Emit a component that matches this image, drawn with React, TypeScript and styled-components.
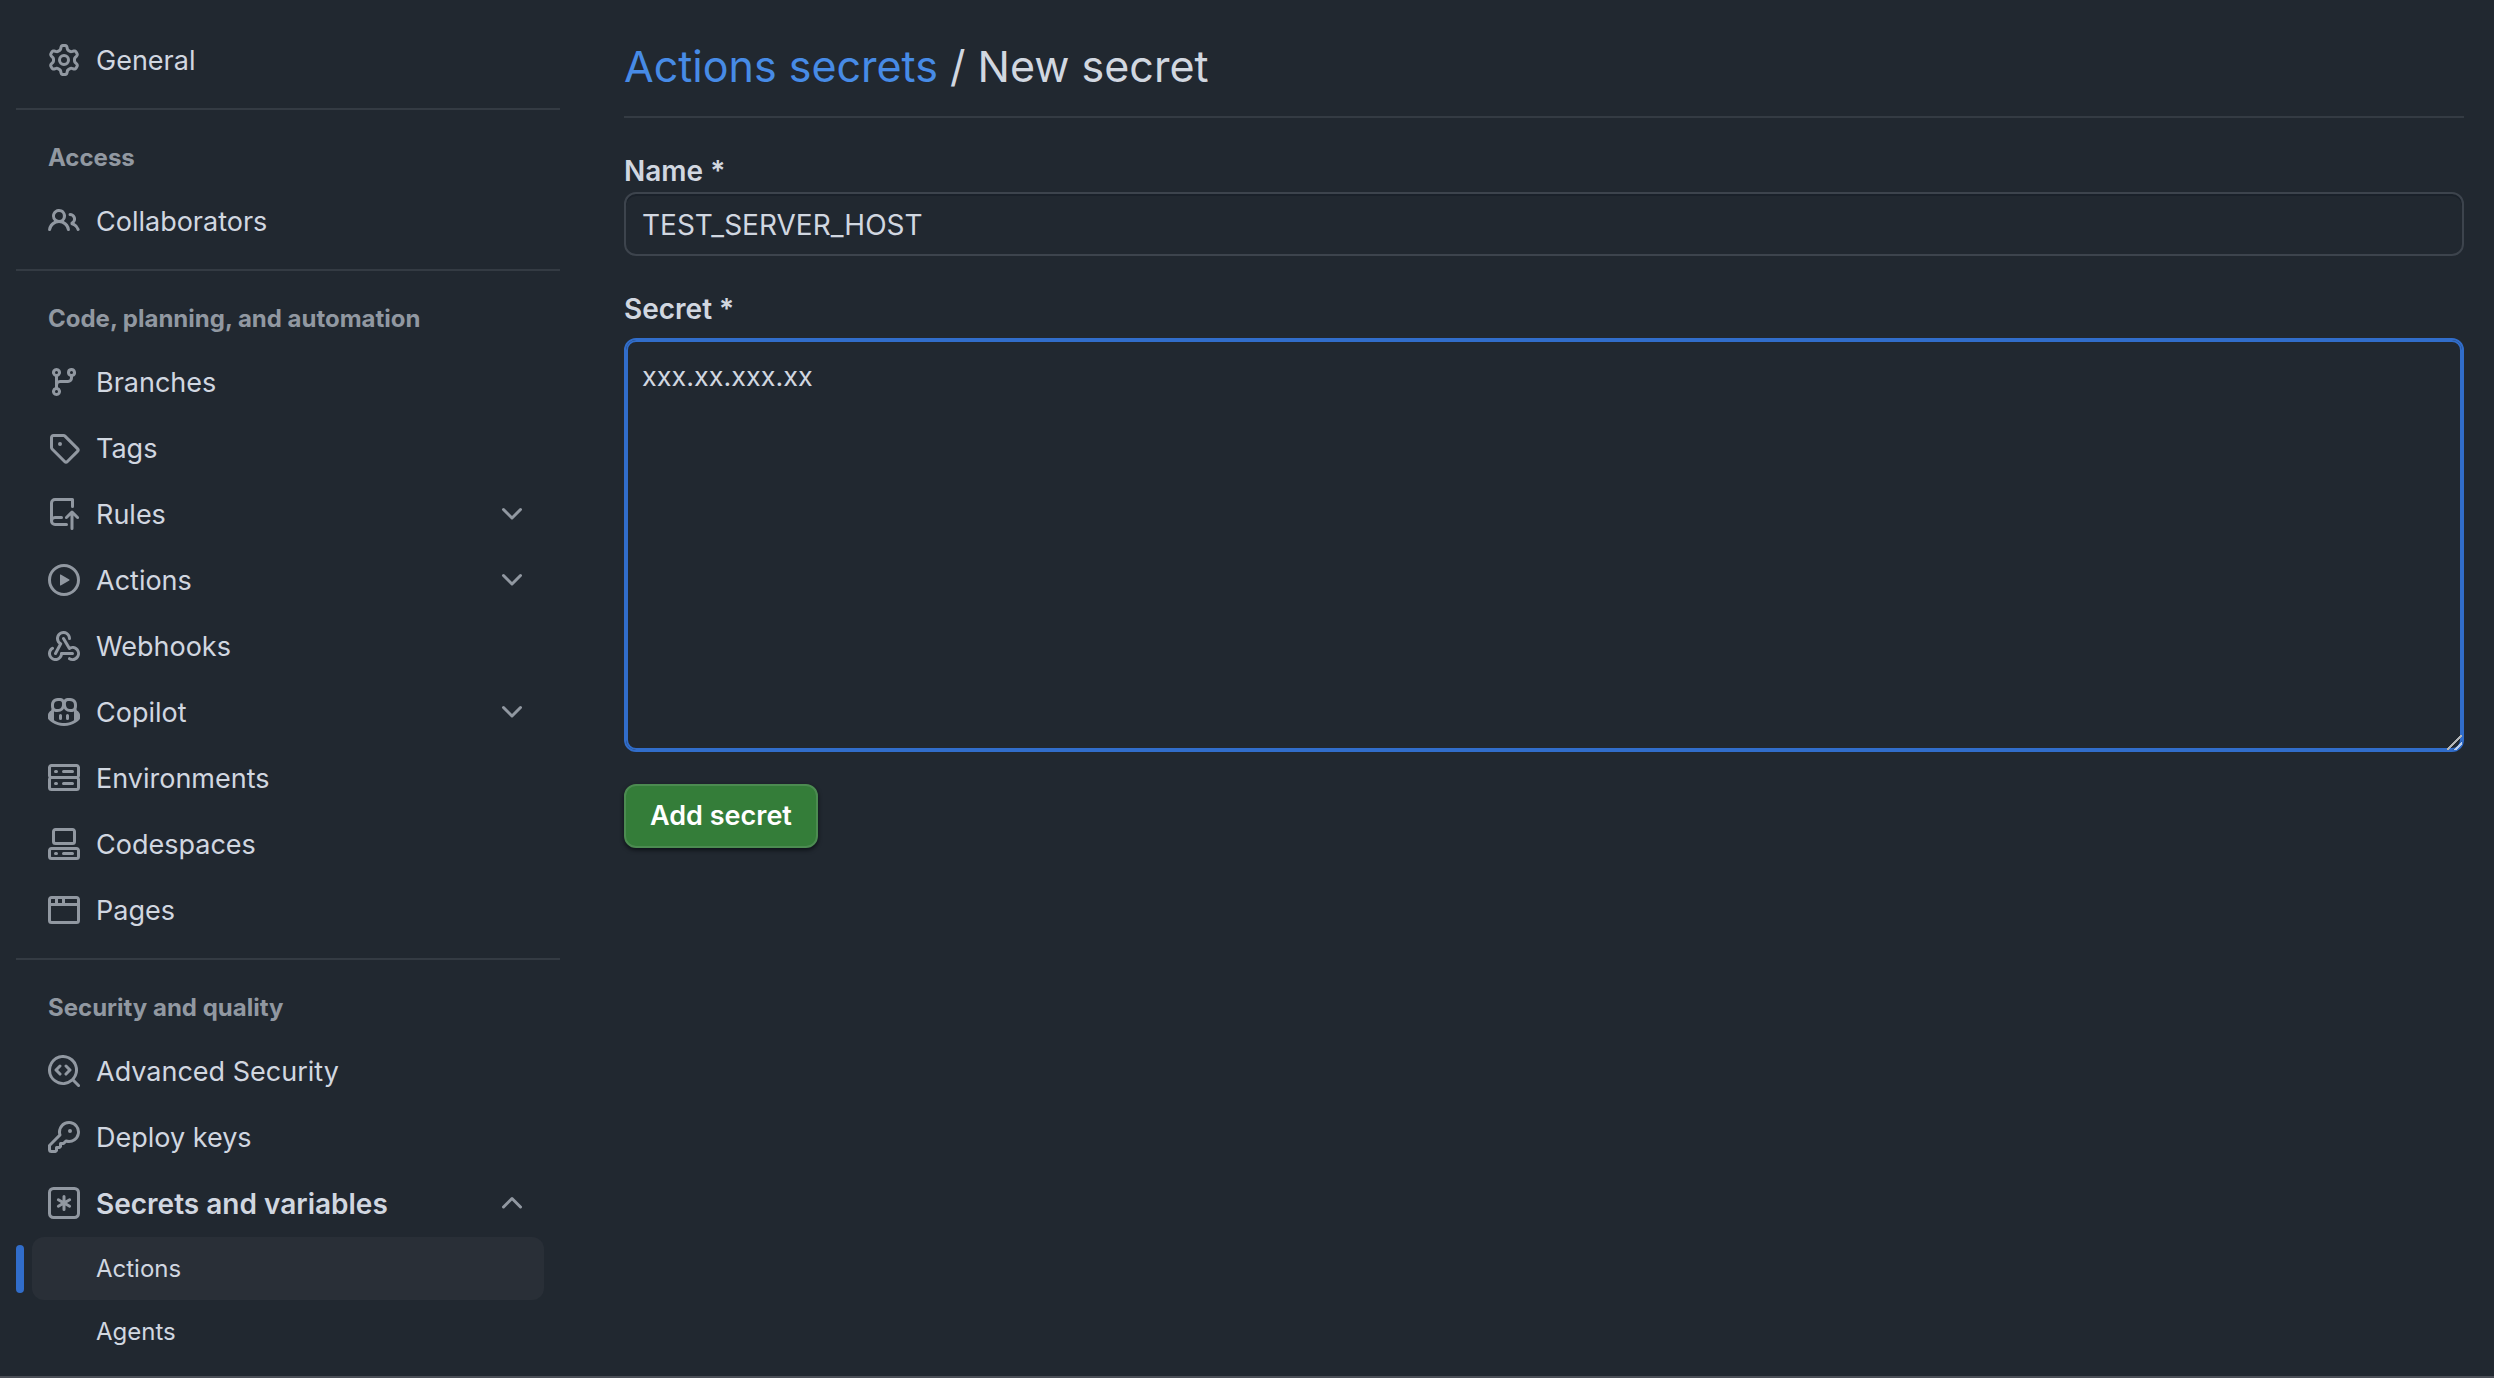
import React from "react";
import styled, { createGlobalStyle } from "styled-components";

const color = {
  canvas: "#212830",
  text: "#d1d7e0",
  muted: "#9198a1",
  divider: "#343b43",
  border: "#3d444d",
  accent: "#316dca",
  link: "#478be6",
  selected: "#292f37",
  green: "#347d39",
};

const GlobalStyle = createGlobalStyle`
  *, *::before, *::after { box-sizing: border-box; }
  body {
    margin: 0;
    background: ${color.canvas};
    color: ${color.text};
    font-family: Inter, "Liberation Sans", sans-serif;
    font-size: 27px;
    line-height: 42px;
    -webkit-font-smoothing: antialiased;
  }
`;

const icons = {
  gear: "M8 0a8.2 8.2 0 0 1 .701.031C9.444.095 9.99.645 10.16 1.29l.288 1.107c.018.066.079.158.212.224.231.114.454.243.668.386.123.082.233.09.299.071l1.103-.303c.644-.176 1.392.021 1.82.63.27.385.506.792.704 1.218.315.675.111 1.422-.364 1.891l-.814.806c-.049.048-.098.147-.088.294.016.257.016.515 0 .772-.01.147.038.246.088.294l.814.806c.475.469.679 1.216.364 1.891a7.977 7.977 0 0 1-.704 1.217c-.428.61-1.176.807-1.82.63l-1.102-.302c-.067-.019-.177-.011-.3.071a5.909 5.909 0 0 1-.668.386c-.133.066-.194.158-.211.224l-.29 1.106c-.168.646-.715 1.196-1.458 1.26a8.006 8.006 0 0 1-1.402 0c-.743-.064-1.289-.614-1.458-1.26l-.289-1.106c-.018-.066-.079-.158-.212-.224a5.738 5.738 0 0 1-.668-.386c-.123-.082-.233-.09-.299-.071l-1.103.303c-.644.176-1.392-.021-1.82-.63a8.12 8.12 0 0 1-.704-1.218c-.315-.675-.111-1.422.363-1.891l.815-.806c.05-.048.098-.147.088-.294a6.214 6.214 0 0 1 0-.772c.01-.147-.038-.246-.088-.294l-.815-.806C.635 6.045.431 5.298.746 4.623a7.92 7.92 0 0 1 .704-1.217c.428-.61 1.176-.807 1.82-.63l1.102.302c.067.019.177.011.3-.071.214-.143.437-.272.668-.386.133-.066.194-.158.211-.224l.29-1.106C6.009.645 6.556.095 7.299.03 7.53.01 7.764 0 8 0Zm-.571 1.525c-.036.003-.108.036-.137.146l-.289 1.105c-.147.561-.549.967-.998 1.189-.173.086-.34.183-.5.29-.417.278-.97.423-1.529.27l-1.103-.303c-.109-.03-.175.016-.195.045-.22.312-.412.644-.573.99-.014.031-.021.11.059.19l.815.806c.411.406.562.957.53 1.456a4.709 4.709 0 0 0 0 .582c.032.499-.119 1.05-.53 1.456l-.815.806c-.081.08-.073.159-.059.19.162.346.353.677.573.989.02.03.085.076.195.046l1.102-.303c.56-.153 1.113-.008 1.53.27.161.107.328.204.501.29.447.222.85.629.997 1.189l.289 1.105c.029.109.101.143.137.146a6.6 6.6 0 0 0 1.142 0c.036-.003.108-.036.137-.146l.289-1.105c.147-.561.549-.967.998-1.189.173-.086.34-.183.5-.29.417-.278.97-.423 1.529-.27l1.103.303c.109.029.175-.016.195-.045.22-.313.411-.644.573-.99.014-.031.021-.11-.059-.19l-.815-.806c-.411-.406-.562-.957-.53-1.456a4.709 4.709 0 0 0 0-.582c-.032-.499.119-1.05.53-1.456l.815-.806c.081-.08.073-.159.059-.19a6.464 6.464 0 0 0-.573-.989c-.02-.03-.085-.076-.195-.046l-1.102.303c-.56.153-1.113.008-1.53-.27a4.44 4.44 0 0 0-.501-.29c-.447-.222-.85-.629-.997-1.189l-.289-1.105c-.029-.11-.101-.143-.137-.146a6.6 6.6 0 0 0-1.142 0ZM11 8a3 3 0 1 1-6 0 3 3 0 0 1 6 0ZM9.5 8a1.5 1.5 0 1 0-3.001.001A1.5 1.5 0 0 0 9.5 8Z",
  people: "M2 5.5a3.5 3.5 0 1 1 5.898 2.549 5.508 5.508 0 0 1 3.034 4.084.75.75 0 1 1-1.482.235 4 4 0 0 0-7.9 0 .75.75 0 0 1-1.482-.236A5.507 5.507 0 0 1 3.102 8.05 3.493 3.493 0 0 1 2 5.5ZM11 4a3.001 3.001 0 0 1 2.22 5.018 5.01 5.01 0 0 1 2.56 3.012.749.749 0 0 1-.885.954.752.752 0 0 1-.549-.514 3.507 3.507 0 0 0-2.522-2.372.75.75 0 0 1-.574-.73v-.352a.75.75 0 0 1 .416-.672A1.5 1.5 0 0 0 11 5.5.75.75 0 0 1 11 4Zm-5.5-.5a2 2 0 1 0-.001 3.999A2 2 0 0 0 5.5 3.5Z",
  branch: "M9.5 3.25a2.25 2.25 0 1 1 3 2.122V6A2.5 2.5 0 0 1 10 8.5H6a1 1 0 0 0-1 1v1.128a2.251 2.251 0 1 1-1.5 0V5.372a2.25 2.25 0 1 1 1.5 0v1.836A2.493 2.493 0 0 1 6 7h4a1 1 0 0 0 1-1v-.628A2.25 2.25 0 0 1 9.5 3.25Zm-6 0a.75.75 0 1 0 1.5 0 .75.75 0 0 0-1.5 0Zm8.25-.75a.75.75 0 1 0 0 1.5.75.75 0 0 0 0-1.5ZM4.25 12a.75.75 0 1 0 0 1.5.75.75 0 0 0 0-1.5Z",
  tag: "M1 7.775V2.75C1 1.784 1.784 1 2.75 1h5.025c.464 0 .91.184 1.238.513l6.25 6.25a1.75 1.75 0 0 1 0 2.474l-5.026 5.026a1.75 1.75 0 0 1-2.474 0l-6.25-6.25A1.752 1.752 0 0 1 1 7.775Zm1.5 0c0 .066.026.13.073.177l6.25 6.25a.25.25 0 0 0 .354 0l5.025-5.025a.25.25 0 0 0 0-.354l-6.25-6.25a.25.25 0 0 0-.177-.073H2.75a.25.25 0 0 0-.25.25ZM6 5a1 1 0 1 1 0 2 1 1 0 0 1 0-2Z",
  repoPush: "M1 2.5A2.5 2.5 0 0 1 3.5 0h8.75a.75.75 0 0 1 .75.75v3.5a.75.75 0 0 1-1.5 0V1.5h-8a1 1 0 0 0-1 1v6.708A2.493 2.493 0 0 1 3.5 9h3.25a.75.75 0 0 1 0 1.5H3.5a1 1 0 0 0 0 2h5.75a.75.75 0 0 1 0 1.5H3.5A2.5 2.5 0 0 1 1 11.5Zm13.23 7.79-1.48-1.481v6.441a.75.75 0 0 1-1.5 0V8.809L9.77 10.29a.749.749 0 0 1-1.275-.326.749.749 0 0 1 .215-.734l2.76-2.76a.75.75 0 0 1 1.06 0l2.76 2.76a.749.749 0 0 1-.326 1.275.749.749 0 0 1-.734-.215Z",
  play: "M8 0a8 8 0 1 1 0 16A8 8 0 0 1 8 0ZM1.5 8a6.5 6.5 0 1 0 13 0 6.5 6.5 0 0 0-13 0Zm4.879-2.773 4.264 2.559a.25.25 0 0 1 0 .428l-4.264 2.559A.25.25 0 0 1 6 10.559V5.442a.25.25 0 0 1 .379-.215Z",
  webhook: "M5.5 4.25a2.25 2.25 0 0 1 4.5 0 .75.75 0 0 0 1.5 0 3.75 3.75 0 1 0-6.14 2.889l-2.272 4.258a.75.75 0 0 0 1.324.706L7 7.25a.75.75 0 0 0-.309-1.015A2.25 2.25 0 0 1 5.5 4.25ZM7.364 3.607a.75.75 0 0 1 1.03.257l2.608 4.349a3.75 3.75 0 1 1-.628 6.785.75.75 0 0 1 .752-1.299 2.25 2.25 0 1 0-.033-3.88.75.75 0 0 1-1.03-.256L7.107 4.636a.75.75 0 0 1 .257-1.03ZM2.9 8.776A.75.75 0 0 1 2.625 9.8 2.25 2.25 0 1 0 6 11.75a.75.75 0 0 1 .75-.751h5.5a.75.75 0 0 1 0 1.5H7.425a3.751 3.751 0 1 1-5.55-3.998.75.75 0 0 1 1.024.274Z",
  copilot: "M7.998 15.035c-4.562 0-7.873-2.914-7.998-3.749V9.338c.085-.628.677-1.686 1.588-2.065.013-.07.024-.143.036-.218.029-.183.06-.384.126-.612-.201-.508-.254-1.084-.254-1.656 0-.87.128-1.769.693-2.484.579-.733 1.494-1.124 2.724-1.261 1.206-.134 2.262.034 2.944.765.05.053.096.108.139.165.044-.057.094-.112.143-.165.682-.731 1.738-.899 2.944-.765 1.23.137 2.145.528 2.724 1.261.566.715.693 1.614.693 2.484 0 .572-.053 1.148-.254 1.656.066.228.098.429.126.612.012.076.024.148.037.218.924.385 1.522 1.471 1.591 2.095v1.872c0 .766-3.351 3.795-8.002 3.795Zm0-1.485c2.28 0 4.584-1.11 5.002-1.433V7.862l-.023-.116c-.49.21-1.075.291-1.727.291-1.146 0-2.059-.327-2.71-.991A3.222 3.222 0 0 1 8 6.303a3.24 3.24 0 0 1-.544.743c-.65.664-1.563.991-2.71.991-.652 0-1.236-.081-1.727-.291l-.023.116v4.255c.419.323 2.722 1.433 5.002 1.433ZM6.762 2.83c-.193-.206-.637-.413-1.682-.297-1.019.113-1.479.404-1.713.7-.247.312-.369.789-.369 1.554 0 .793.129 1.171.308 1.371.162.181.519.379 1.442.379.853 0 1.339-.235 1.638-.54.315-.322.527-.827.617-1.553.117-.935-.037-1.395-.241-1.614Zm4.155-.297c-1.044-.116-1.488.091-1.681.297-.204.219-.359.679-.242 1.614.091.726.303 1.231.618 1.553.299.305.784.54 1.638.54.922 0 1.28-.198 1.442-.379.179-.2.308-.578.308-1.371 0-.765-.123-1.242-.37-1.554-.233-.296-.693-.587-1.713-.7ZM6.25 9.037a.75.75 0 0 1 .75.75v1.501a.75.75 0 0 1-1.5 0V9.787a.75.75 0 0 1 .75-.75Zm4.25.75v1.501a.75.75 0 0 1-1.5 0V9.787a.75.75 0 0 1 1.5 0Z",
  server: "M1.75 1h12.5c.966 0 1.75.784 1.75 1.75v4c0 .372-.116.717-.314 1 .198.283.314.628.314 1v4a1.75 1.75 0 0 1-1.75 1.75H1.75A1.75 1.75 0 0 1 0 12.75v-4c0-.358.109-.707.314-1a1.739 1.739 0 0 1-.314-1v-4C0 1.784.784 1 1.75 1ZM1.5 2.75v4c0 .138.112.25.25.25h12.5a.25.25 0 0 0 .25-.25v-4a.25.25 0 0 0-.25-.25H1.75a.25.25 0 0 0-.25.25Zm.25 5.75a.25.25 0 0 0-.25.25v4c0 .138.112.25.25.25h12.5a.25.25 0 0 0 .25-.25v-4a.25.25 0 0 0-.25-.25ZM7 4.75A.75.75 0 0 1 7.75 4h4.5a.75.75 0 0 1 0 1.5h-4.5A.75.75 0 0 1 7 4.75ZM7.75 10h4.5a.75.75 0 0 1 0 1.5h-4.5a.75.75 0 0 1 0-1.5ZM3 4.75A.75.75 0 0 1 3.75 4h.5a.75.75 0 0 1 0 1.5h-.5A.75.75 0 0 1 3 4.75ZM3.75 10h.5a.75.75 0 0 1 0 1.5h-.5a.75.75 0 0 1 0-1.5Z",
  codespaces: "M0 11.25c0-.966.784-1.75 1.75-1.75h12.5c.966 0 1.75.784 1.75 1.75v3A1.75 1.75 0 0 1 14.25 16H1.75A1.75 1.75 0 0 1 0 14.25Zm2-9.5C2 .784 2.784 0 3.75 0h8.5C13.216 0 14 .784 14 1.75v5a1.75 1.75 0 0 1-1.75 1.75h-8.5A1.75 1.75 0 0 1 2 6.75Zm1.75-.25a.25.25 0 0 0-.25.25v5c0 .138.112.25.25.25h8.5a.25.25 0 0 0 .25-.25v-5a.25.25 0 0 0-.25-.25Zm-2 9.5a.25.25 0 0 0-.25.25v3c0 .138.112.25.25.25h12.5a.25.25 0 0 0 .25-.25v-3a.25.25 0 0 0-.25-.25ZM7 12.75a.75.75 0 0 1 .75-.75h4.5a.75.75 0 0 1 0 1.5h-4.5a.75.75 0 0 1-.75-.75Zm-4 0a.75.75 0 0 1 .75-.75h.5a.75.75 0 0 1 0 1.5h-.5a.75.75 0 0 1-.75-.75Z",
  browser: "M0 2.75C0 1.784.784 1 1.75 1h12.5c.966 0 1.75.784 1.75 1.75v10.5A1.75 1.75 0 0 1 14.25 15H1.75A1.75 1.75 0 0 1 0 13.25ZM14.5 6h-13v7.25c0 .138.112.25.25.25h12.5a.25.25 0 0 0 .25-.25Zm-6-3.5v2h6V2.75a.25.25 0 0 0-.25-.25ZM5 2.5v2h2v-2Zm-3.25 0a.25.25 0 0 0-.25.25V4.5h2v-2Z",
  codescan: "M8.47 4.97a.75.75 0 0 0 0 1.06L9.94 7.5 8.47 8.97a.75.75 0 1 0 1.06 1.06l2-2a.75.75 0 0 0 0-1.06l-2-2a.75.75 0 0 0-1.06 0ZM6.53 6.03a.75.75 0 0 0-1.06-1.06l-2 2a.75.75 0 0 0 0 1.06l2 2a.75.75 0 1 0 1.06-1.06L5.06 7.5l1.47-1.47ZM12.246 13.307a7.501 7.501 0 1 1 1.06-1.06l2.474 2.473a.749.749 0 0 1-.326 1.275.749.749 0 0 1-.734-.215ZM1.5 7.5a6.002 6.002 0 0 0 3.608 5.504 6.002 6.002 0 0 0 6.486-1.117.748.748 0 0 1 .292-.293A6 6 0 1 0 1.5 7.5Z",
  key: "M10.5 0a5.499 5.499 0 1 1-1.288 10.848l-.932.932a.749.749 0 0 1-.53.22H7v.75a.749.749 0 0 1-.22.53l-.5.5a.749.749 0 0 1-.53.22H5v.75a.749.749 0 0 1-.22.53l-.5.5a.749.749 0 0 1-.53.22h-2A1.75 1.75 0 0 1 0 14.25v-2c0-.199.079-.389.22-.53l4.932-4.932A5.5 5.5 0 0 1 10.5 0Zm-4 5.5c-.001.431.069.86.205 1.269a.75.75 0 0 1-.181.768L1.5 12.56v1.69c0 .138.112.25.25.25h1.69l.06-.06v-1.19a.75.75 0 0 1 .75-.75h1.19l.06-.06v-1.19a.75.75 0 0 1 .75-.75h1.19l1.023-1.025a.75.75 0 0 1 .768-.18A4 4 0 1 0 6.5 5.5ZM11 6a1 1 0 1 1 0-2 1 1 0 0 1 0 2Z",
  asterisk: "M0 2.75A2.75 2.75 0 0 1 2.75 0h10.5A2.75 2.75 0 0 1 16 2.75v10.5A2.75 2.75 0 0 1 13.25 16H2.75A2.75 2.75 0 0 1 0 13.25ZM2.75 1.5c-.69 0-1.25.56-1.25 1.25v10.5c0 .69.56 1.25 1.25 1.25h10.5c.69 0 1.25-.56 1.25-1.25V2.75c0-.69-.56-1.25-1.25-1.25ZM8 4a.75.75 0 0 1 .75.75V6.7l1.69-.975a.75.75 0 0 1 .75 1.3L9.5 8l1.69.976a.75.75 0 0 1-.75 1.298L8.75 9.3v1.951a.75.75 0 0 1-1.5 0V9.299l-1.69.976a.75.75 0 0 1-.75-1.3L6.5 8l-1.69-.975a.75.75 0 0 1 .75-1.3l1.69.976V4.75A.75.75 0 0 1 8 4Z",
  chevronDown: "M12.78 5.22a.749.749 0 0 1 0 1.06l-4.25 4.25a.749.749 0 0 1-1.06 0L3.22 6.28a.749.749 0 1 1 1.06-1.06L8 8.939l3.72-3.719a.749.749 0 0 1 1.06 0Z",
  chevronUp: "M3.22 10.53a.749.749 0 0 1 0-1.06l4.25-4.25a.749.749 0 0 1 1.06 0l4.25 4.25a.749.749 0 1 1-1.06 1.06L8 6.811 4.28 10.53a.749.749 0 0 1-1.06 0Z",
};

type IconName = keyof typeof icons;

const IconSvg = styled.svg`
  flex: none;
  width: 32px;
  height: 40px;
  padding: 4px 0;
  fill: ${color.muted};
`;

const Icon = ({ name }: { name: IconName }) => (
  <IconSvg viewBox="0 0 16 16" aria-hidden="true">
    <path d={icons[name]} />
  </IconSvg>
);

const Page = styled.div`
  display: flex;
  gap: 64px;
  min-height: 100vh;
  padding: 28px 30px 0 16px;
  border-bottom: 2px solid #4b4f57;
`;

const Sidebar = styled.nav`
  flex: none;
  width: 544px;
`;

const List = styled.ul`
  list-style: none;
  margin: 0;
  padding: 0;
`;

const Section = styled.section`
  & + & {
    margin-top: 14px;
    padding-top: 16px;
    border-top: 2px solid ${color.divider};
  }
`;

const SectionTitle = styled.h3`
  margin: 0;
  padding: 14px 32px 13px;
  font-size: 24px;
  line-height: 36px;
  font-weight: 700;
  color: ${color.muted};
`;

const itemStyle = `
  display: flex;
  align-items: flex-start;
  gap: 16px;
  width: 512px;
  margin: 0 16px;
  padding: 12px 16px;
  border: 0;
  border-radius: 12px;
  background: none;
  color: inherit;
  font: inherit;
  text-align: left;
  text-decoration: none;
`;

const ItemLink = styled.a`
  ${itemStyle}
`;

const ItemButton = styled.button<{ $active?: boolean }>`
  ${itemStyle}
  font-size: ${(p) => (p.$active ? 28 : 27)}px;
  font-weight: ${(p) => (p.$active ? 600 : 400)};
`;

const ItemLabel = styled.span`
  flex: 1;
`;

const SubItem = styled.li<{ $current?: boolean }>`
  display: flex;
  align-items: center;
  gap: 8px;

  &::before {
    content: "";
    width: 8px;
    height: 48px;
    border-radius: 12px;
    background: ${(p) => (p.$current ? color.accent : "transparent")};
  }
`;

const SubLink = styled.a<{ $current?: boolean }>`
  width: 512px;
  padding: 14px 64px 13px;
  border-radius: 12px;
  background: ${(p) => (p.$current ? color.selected : "transparent")};
  color: inherit;
  font-size: 24px;
  line-height: 36px;
  text-decoration: none;
`;

const Main = styled.main`
  flex: 1;
  min-width: 0;
`;

const Title = styled.h1`
  margin: 0 0 32px;
  padding: 2px 0 14px;
  border-bottom: 2px solid ${color.divider};
  font-size: 43px;
  line-height: 72px;
  font-weight: 400;
`;

const TitleLink = styled.a`
  color: ${color.link};
  text-decoration: none;
`;

const Form = styled.form`
  display: flex;
  flex-direction: column;
  align-items: flex-start;
`;

const Field = styled.div<{ $gap: number }>`
  display: flex;
  flex-direction: column;
  gap: ${(p) => p.$gap}px;
  width: 100%;
  margin-bottom: 32px;
`;

const Label = styled.label`
  font-size: 28px;
  font-weight: 600;
  line-height: 42px;
`;

const TextInput = styled.input`
  width: 100%;
  height: 64px;
  padding: 10px 16px 8px;
  border: 2px solid ${color.border};
  border-radius: 12px;
  outline: none;
  background: ${color.canvas};
  box-shadow: inset 0 2px 0 #1a212a;
  color: inherit;
  font: inherit;
  font-size: 28px;
`;

const TextArea = styled.textarea`
  display: block;
  width: 100%;
  height: 414px;
  padding: 16px;
  border: 2px solid ${color.accent};
  border-radius: 12px;
  outline: none;
  background: ${color.canvas};
  box-shadow: inset 0 0 0 2px ${color.accent};
  color: inherit;
  font: inherit;
  resize: vertical;

  &::-webkit-resizer {
    background: linear-gradient(
      135deg,
      transparent 46%,
      #b4b6b8 46% 54%,
      transparent 54% 72%,
      #b9cdec 72% 80%,
      transparent 80%
    );
  }
`;

const SubmitButton = styled.button`
  height: 64px;
  padding: 0 24px;
  border: 2px solid #4c8b51;
  border-radius: 12px;
  background: ${color.green};
  box-shadow: 0 2px 4px #010409aa;
  color: #ffffff;
  font: inherit;
  font-weight: 600;
`;

type NavEntry = { label: string; icon: IconName; expandable?: boolean };

const sections: { title?: string; items: NavEntry[] }[] = [
  { items: [{ label: "General", icon: "gear" }] },
  { title: "Access", items: [{ label: "Collaborators", icon: "people" }] },
  {
    title: "Code, planning, and automation",
    items: [
      { label: "Branches", icon: "branch" },
      { label: "Tags", icon: "tag" },
      { label: "Rules", icon: "repoPush", expandable: true },
      { label: "Actions", icon: "play", expandable: true },
      { label: "Webhooks", icon: "webhook" },
      { label: "Copilot", icon: "copilot", expandable: true },
      { label: "Environments", icon: "server" },
      { label: "Codespaces", icon: "codespaces" },
      { label: "Pages", icon: "browser" },
    ],
  },
];

const NavItem = ({ label, icon, expandable }: NavEntry) => (
  <li>
    {expandable ? (
      <ItemButton type="button" aria-expanded="false">
        <Icon name={icon} />
        <ItemLabel>{label}</ItemLabel>
        <Icon name="chevronDown" />
      </ItemButton>
    ) : (
      <ItemLink href="#">
        <Icon name={icon} />
        <ItemLabel>{label}</ItemLabel>
      </ItemLink>
    )}
  </li>
);

export default function App() {
  return (
    <>
      <GlobalStyle />
      <Page>
        <Sidebar aria-label="Repository settings">
          {sections.map((section, i) => (
            <Section key={i}>
              {section.title && <SectionTitle>{section.title}</SectionTitle>}
              <List>
                {section.items.map((item) => (
                  <NavItem key={item.label} {...item} />
                ))}
              </List>
            </Section>
          ))}
          <Section>
            <SectionTitle>Security and quality</SectionTitle>
            <List>
              <NavItem label="Advanced Security" icon="codescan" />
              <NavItem label="Deploy keys" icon="key" />
              <li>
                <ItemButton type="button" aria-expanded="true" $active>
                  <Icon name="asterisk" />
                  <ItemLabel>Secrets and variables</ItemLabel>
                  <Icon name="chevronUp" />
                </ItemButton>
                <List>
                  <SubItem $current>
                    <SubLink href="#" aria-current="page" $current>
                      Actions
                    </SubLink>
                  </SubItem>
                  <SubItem>
                    <SubLink href="#">Agents</SubLink>
                  </SubItem>
                </List>
              </li>
            </List>
          </Section>
        </Sidebar>
        <Main>
          <Title>
            <TitleLink href="#">Actions secrets</TitleLink> / New secret
          </Title>
          <Form onSubmit={(e) => e.preventDefault()}>
            <Field $gap={0}>
              <Label htmlFor="secret-name">Name *</Label>
              <TextInput id="secret-name" type="text" defaultValue="TEST_SERVER_HOST" />
            </Field>
            <Field $gap={8}>
              <Label htmlFor="secret-value">Secret *</Label>
              <TextArea id="secret-value" defaultValue="xxx.xx.xxx.xx" spellCheck={false} />
            </Field>
            <SubmitButton type="submit">Add secret</SubmitButton>
          </Form>
        </Main>
      </Page>
    </>
  );
}
